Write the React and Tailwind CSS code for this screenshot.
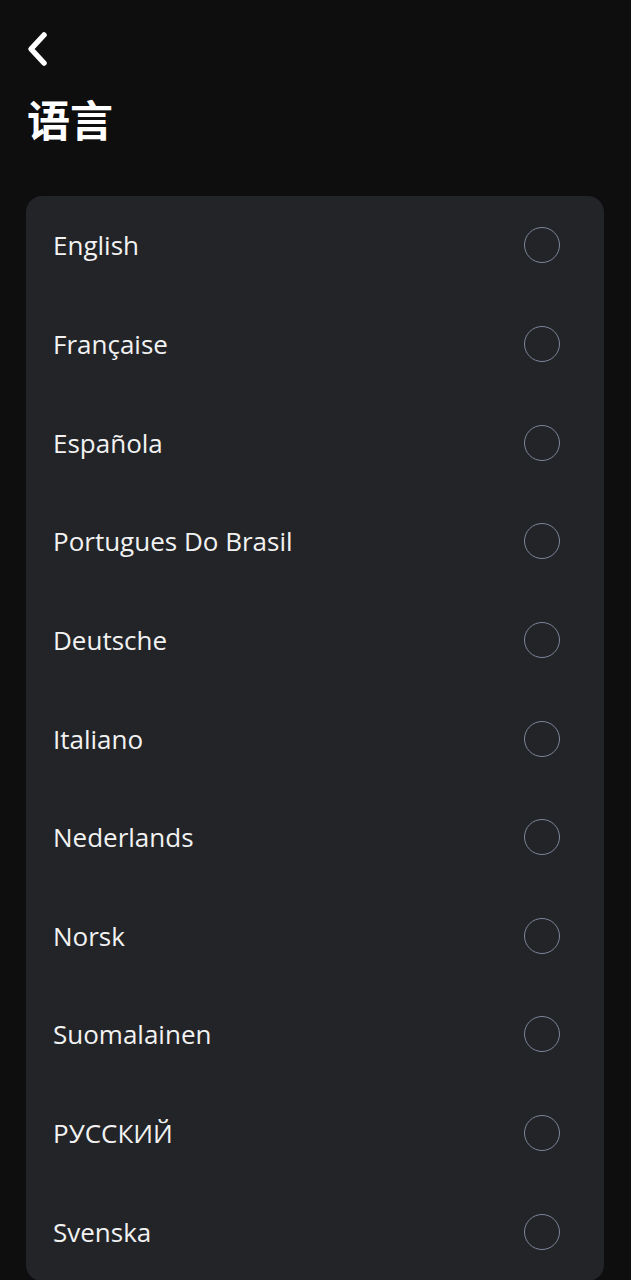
import React, { useState } from "react";

const languages = [
  "English",
  "Française",
  "Española",
  "Portugues Do Brasil",
  "Deutsche",
  "Italiano",
  "Nederlands",
  "Norsk",
  "Suomalainen",
  "РУССКИЙ",
  "Svenska",
];

const BackIcon = () => (
  <svg width="24" height="36" viewBox="0 0 24 36" fill="none">
    <path
      d="M18 4L5 18L18 32"
      stroke="white"
      strokeWidth="5.5"
      strokeLinecap="round"
      strokeLinejoin="round"
    />
  </svg>
);

export default function App() {
  const [selected, setSelected] = useState(null);

  return (
    <div
      className="min-h-[1280px] bg-[#0e0e0f] px-[26px] pt-[31px] text-white"
      style={{ fontFamily: '"Open Sans", "Noto Sans CJK SC", sans-serif' }}
    >
      <button className="flex h-[36px] w-[24px] items-center" aria-label="Back">
        <BackIcon />
      </button>

      <h1 className="mt-[24px] pl-[1px] text-[43px] font-bold leading-[54px] font-['Noto_Sans_CJK_SC',sans-serif]">
        语言
      </h1>

      <div className="mt-[51px] w-[578px] overflow-hidden rounded-[16px] bg-[#222428]">
        {languages.map((lang) => (
          <div
            key={lang}
            onClick={() => setSelected(lang)}
            className="flex h-[98.65px] cursor-pointer items-center justify-between pl-[27px] pr-[44px]"
          >
            <span className="text-[26px] leading-none text-[#f2f2f2]">{lang}</span>
            <span className="flex h-[36px] w-[36px] items-center justify-center rounded-full border-[1.5px] border-[#7e8699]">
              {selected === lang && (
                <span className="h-[20px] w-[20px] rounded-full bg-[#7e8699]" />
              )}
            </span>
          </div>
        ))}
      </div>
    </div>
  );
}
